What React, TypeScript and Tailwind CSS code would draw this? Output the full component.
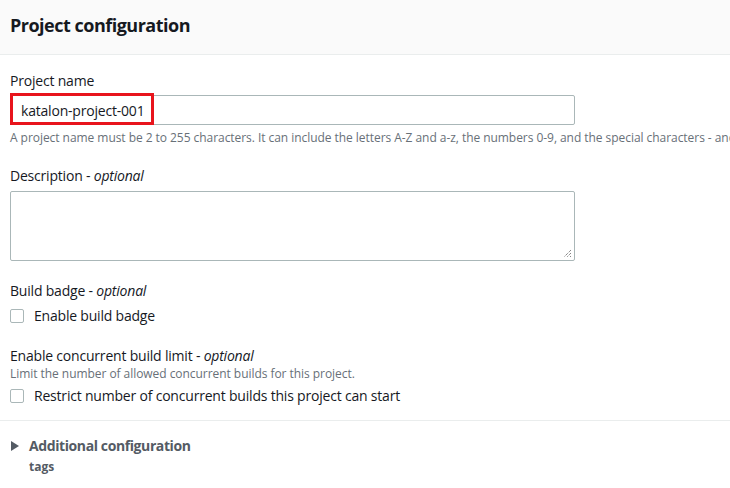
import React from "react";

function Checkbox() {
  return <span className="block w-[14px] h-[14px] shrink-0 rounded-[2px] border border-[#aab7b8] bg-white" />;
}

export default function App() {
  return (
    <div className="w-[730px] h-[488px] overflow-hidden bg-white text-[#16191f] font-['Open_Sans',sans-serif]">
      <div className="h-[55px] bg-[#fafafa] border-b border-[#eaeded] flex items-center px-[10px]">
        <h2 className="text-[18px] font-bold leading-[22px] pb-[5px] tracking-[-0.5px]">Project configuration</h2>
      </div>
      <div className="px-[10px] pt-[16px] text-[14px] tracking-[-0.2px]">
        <div className="leading-[20px]">Project name</div>
        <div className="mt-[4px] relative w-[565px] h-[30px] border border-[#aab7b8] rounded-[2px] flex items-center">
          <span className="pl-[10px]">katalon-project-001</span>
          <div className="absolute left-[-1px] top-[-3px] w-[144px] h-[32px] border-[3px] border-[#e8141c]" />
        </div>
        <div className="mt-[5px] text-[12px] leading-[16px] text-[#687078] whitespace-nowrap tracking-[-0.05px]">
          A project name must be 2 to 255 characters. It can include the letters A-Z and a-z, the numbers 0-9, and the special characters - and _.
        </div>
        <div className="mt-[20px] leading-[20px]">
          Description - <i>optional</i>
        </div>
        <div className="mt-[5px] relative w-[565px] h-[70px] border border-[#aab7b8] rounded-[2px]">
          <svg className="absolute right-[2px] bottom-[2px]" width="9" height="9" viewBox="0 0 9 9">
            <path d="M8 1 L1 8 M8 4 L4 8 M8 7 L7 8" stroke="#555" strokeWidth="1" strokeDasharray="1 1" />
          </svg>
        </div>
        <div className="mt-[20px] leading-[20px]">
          Build badge - <i>optional</i>
        </div>
        <label className="mt-[5px] flex items-center gap-[10px] leading-[20px]">
          <Checkbox />
          <span>Enable build badge</span>
        </label>
        <div className="mt-[20px] leading-[20px]">
          Enable concurrent build limit - <i>optional</i>
        </div>
        <div className="text-[12px] leading-[16px] text-[#687078] tracking-[-0.05px]">
          Limit the number of allowed concurrent builds for this project.
        </div>
        <label className="mt-[4px] flex items-center gap-[10px] leading-[20px]">
          <Checkbox />
          <span>Restrict number of concurrent builds this project can start</span>
        </label>
      </div>
      <div className="mt-[14px] border-t border-[#eaeded] px-[10px] pt-[15px]">
        <div className="flex items-center gap-[10px]">
          <svg width="8" height="10" viewBox="0 0 8 10" className="shrink-0 ml-[1px]">
            <path d="M0 0 L8 5 L0 10 Z" fill="#545b64" />
          </svg>
          <span className="text-[14px] font-bold text-[#545b64] leading-[20px] tracking-[-0.4px]">Additional configuration</span>
        </div>
        <div className="pl-[19px] text-[12px] font-bold text-[#545b64] leading-[16px] mt-[3px]">tags</div>
      </div>
    </div>
  );
}
